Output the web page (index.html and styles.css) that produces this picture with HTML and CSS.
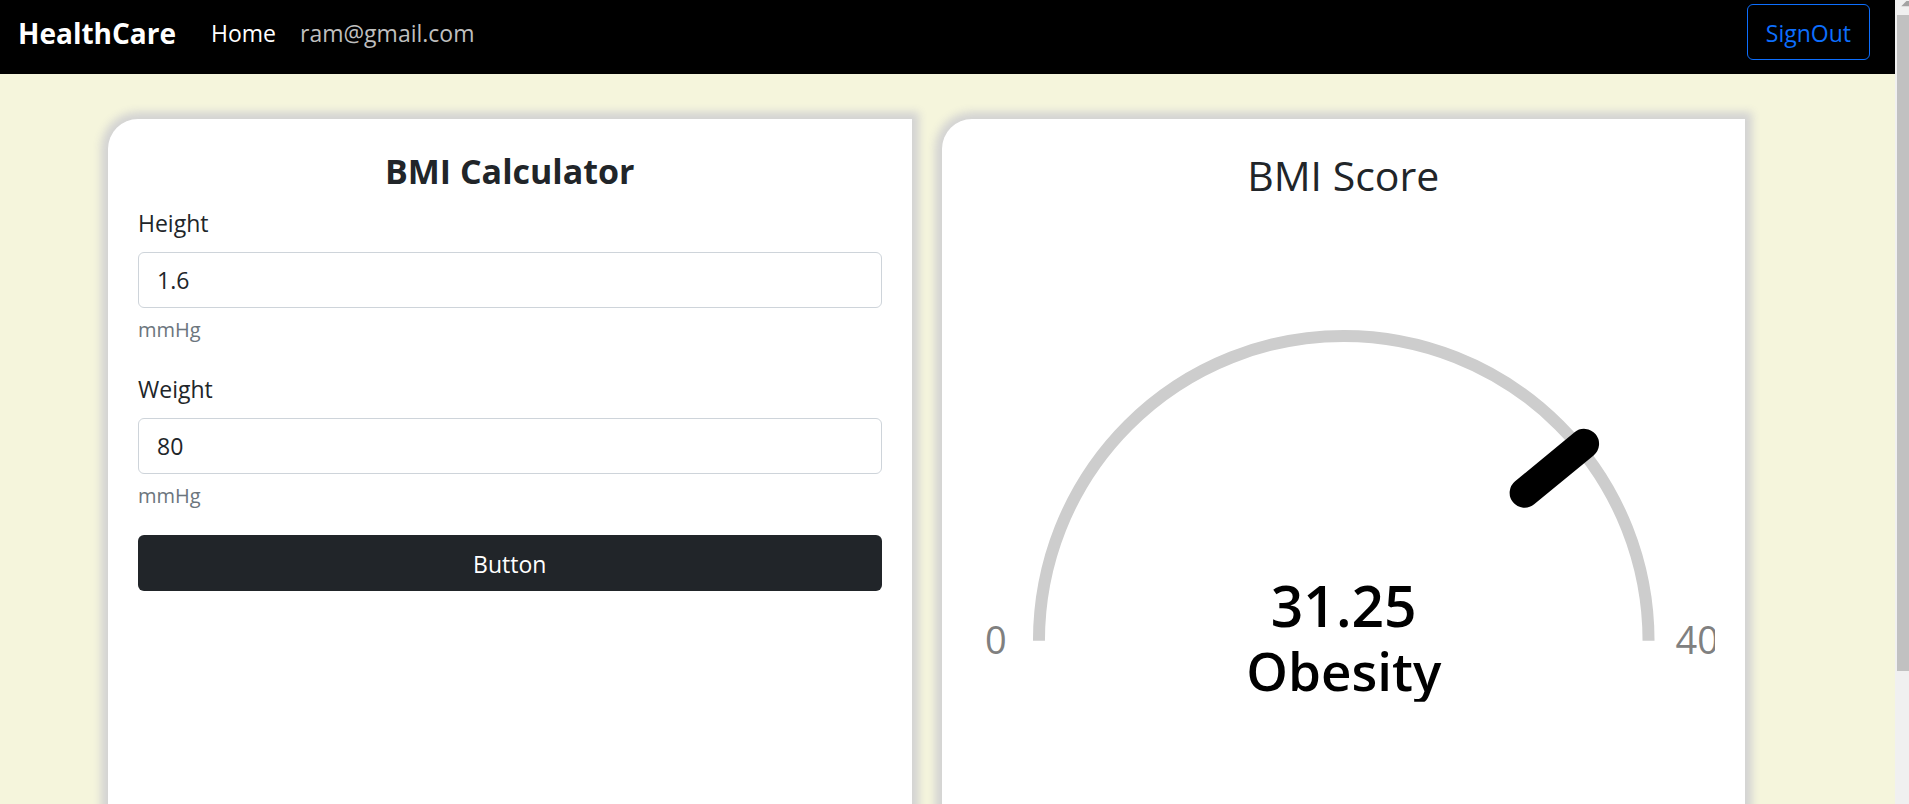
FILE: index.html
```html
<!DOCTYPE html>
<html lang="en">
<head>
<meta charset="utf-8">
<title>HealthCare</title>
<link rel="stylesheet" href="styles.css">
</head>
<body>
<div class="page">
  <header class="navbar">
    <a class="brand" href="#">HealthCare</a>
    <nav class="nav-links">
      <a class="nav-link active" href="#">Home</a>
      <a class="nav-link" href="#">ram@gmail.com</a>
    </nav>
    <button class="btn btn-outline" type="button">SignOut</button>
  </header>
  <main class="cards">
    <section class="card">
      <h2 class="form-title">BMI Calculator</h2>
      <form>
        <div class="field">
          <label for="height">Height</label>
          <input id="height" type="text" value="1.6" aria-describedby="height-unit">
          <div class="hint" id="height-unit">mmHg</div>
        </div>
        <div class="field">
          <label for="weight">Weight</label>
          <input id="weight" type="text" value="80" aria-describedby="weight-unit">
          <div class="hint" id="weight-unit">mmHg</div>
        </div>
        <button class="btn btn-dark" type="button">Button</button>
      </form>
    </section>
    <section class="card">
      <h2 class="score-title">BMI Score</h2>
      <svg class="gauge" viewBox="0 0 744 584" role="img" aria-label="BMI gauge, 31.25, Obesity">
        <path class="dial" d="M67 431 A305 305 0 0 1 677 431"/>
        <path class="needle" d="M553 283 L612.500 234"/>
        <text class="limit" x="24" y="444" text-anchor="middle">0</text>
        <text class="limit" x="704" y="444">40</text>
        <text class="value" x="372" y="417" text-anchor="middle">31.25</text>
        <svg x="0" y="420" width="744" height="72">
          <text class="value category" x="372" y="61" text-anchor="middle">Obesity</text>
        </svg>
      </svg>
    </section>
  </main>
</div>
<div class="scrollbar" aria-hidden="true">
  <svg class="scroll-arrow" viewBox="0 0 14 15"><path d="M5 6 L11 0 H14 V6 Z"/></svg>
  <div class="scroll-thumb"></div>
</div>
</body>
</html>
```
FILE: styles.css
```css
* { box-sizing: border-box; }

body {
  margin: 0;
  display: flex;
  height: 100vh;
  overflow: hidden;
  background: beige;
  color: #212529;
  font-family: "Open Sans", "Noto Sans", sans-serif;
  font-size: 23px;
  line-height: 36px;
}

.page {
  flex: 1;
  min-width: 0;
  display: flex;
  flex-direction: column;
}

.navbar {
  display: flex;
  align-items: center;
  padding: 4px 25px 14px 18px;
  background: #000;
}

.brand {
  margin-right: 35px;
  color: #fff;
  font-size: 28px;
  font-weight: 700;
  text-decoration: none;
}

.nav-links {
  display: flex;
  gap: 24px;
  margin-right: auto;
}

.nav-link {
  color: #bfbfbf;
  text-decoration: none;
}

.brand,
.nav-link {
  padding-top: 2px;
}

.nav-link.active { color: #fff; }

.btn {
  padding: 10px 18px 8px;
  border: 1px solid transparent;
  border-radius: 6px;
  font: inherit;
}

.btn-outline {
  border-color: #0d6efd;
  background: transparent;
  color: #0d6efd;
}

.btn-dark {
  display: block;
  width: 100%;
  background: #212529;
  color: #fff;
}

.cards {
  flex: 1;
  display: grid;
  grid-template-columns: 1fr 1fr;
  gap: 30px;
  padding: 45px 150px 0 108px;
}

.card {
  min-width: 0;
  padding: 30px;
  border-radius: 30px 0 0 0;
  background: #fff;
  box-shadow: 0 0 8px 7px lightgray;
}

.form-title,
.score-title {
  margin: 0;
  text-align: center;
}

.form-title {
  padding: 1px 0 11px;
  font-size: 34px;
  font-weight: 700;
  line-height: 43px;
}

.score-title {
  padding: 1px 0 10px;
  font-size: 41px;
  font-weight: 500;
  line-height: 50px;
}

.field { margin-bottom: 23px; }

.field label {
  display: block;
  padding-top: 1px;
  margin-bottom: 11px;
}

.field + .field { margin-top: 24px; }

.field input {
  display: block;
  width: 100%;
  height: 56px;
  padding: 9px 18px;
  border: 1px solid #ced4da;
  border-radius: 6px;
  background: #fff;
  color: #212529;
  font: inherit;
}

.hint {
  margin-top: 6px;
  color: #6c757d;
  font-size: 20px;
  line-height: 32px;
}

.gauge {
  display: block;
  width: 100%;
}

.dial {
  fill: none;
  stroke: #cdcdcd;
  stroke-width: 12;
}

.needle {
  stroke: #000;
  stroke-width: 30;
  stroke-linecap: round;
}

.limit {
  fill: #808080;
  font-size: 38px;
}

.value {
  fill: #000;
  font-size: 57px;
  font-weight: 600;
}

.category { font-size: 53px; }

.scrollbar {
  width: 14px;
  padding-left: 2px;
  background: #f0f0f0;
}

.scroll-arrow {
  display: block;
  width: 100%;
  height: 15px;
  fill: #a3a3a3;
}

.scroll-thumb {
  height: 656px;
  max-height: 82%;
  background: #c1c1c1;
}
```
